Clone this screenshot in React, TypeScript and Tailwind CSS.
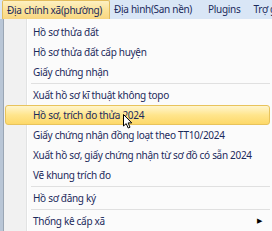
import React from 'react';

const font = { fontFamily: '"Noto Sans", "Open Sans", sans-serif' };

type Row = { label: string; sep?: boolean; active?: boolean; sub?: boolean };

const rows: Row[] = [
    { label: 'Hồ sơ thửa đất' },
    { label: 'Hồ sơ thửa đất cấp huyện' },
    { label: 'Giấy chứng nhận' },
    { label: '', sep: true },
    { label: 'Xuất hồ sơ kĩ thuật không topo' },
    { label: 'Hồ sơ, trích đo thửa 2024', active: true },
    { label: 'Giấy chứng nhận đồng loạt theo TT10/2024' },
    { label: 'Xuất hồ sơ, giấy chứng nhận từ sơ đồ có sẵn 2024' },
    { label: 'Vẽ khung trích đo' },
    { label: '', sep: true },
    { label: 'Hồ sơ đăng ký' },
    { label: '', sep: true },
    { label: 'Thống kê cấp xã', sub: true },
];

export default function App() {
    return (
        <div className="w-[272px] h-[231px] overflow-hidden bg-[#b9c6d6] text-[10px] tracking-[-0.3px] text-[#1b2a5c]" style={font}>
            {/* Menu bar */}
            <div className="h-[19px] flex items-stretch bg-[#d9e6f6] whitespace-nowrap">
                <div className="ml-[2px] pl-[4px] pr-[7px] flex items-center rounded-t-[2px] border border-b-0 border-[#e3bd5c] bg-gradient-to-b from-[#fdf0c2] via-[#fbe39a] to-[#f8d681]">
                    Địa chính xã(phường)
                </div>
                <div className="ml-[4px] flex items-center">Địa hình(San nền)</div>
                <div className="ml-[16px] flex items-center">Plugins</div>
                <div className="ml-[13px] flex items-center">Trợ giúp</div>
            </div>

            {/* Dropdown */}
            <div className="relative ml-[3px] h-[212px] pt-[3px] pr-[2px] pl-[1px] border-l border-[#9aa6b4] bg-[linear-gradient(to_right,#f1f1f1_22px,#e2e3e3_22px,#e2e3e3_23px,#ffffff_23px,#ffffff_24px,#fbfbfb_24px)]">
                {rows.map((r, i) =>
                    r.sep ? (
                        <div key={i} className="h-[3px] pl-[26px] flex items-center">
                            <div className="w-full h-px bg-[#e0e0e0]" />
                        </div>
                    ) : r.active ? (
                        <div
                            key={i}
                            className="h-[20px] pl-[27px] flex items-center rounded-[3px] border border-[#e8c35c] bg-gradient-to-b from-[#fff5cc] via-[#ffe58c] to-[#fdd868] whitespace-nowrap"
                        >
                            {r.label}
                        </div>
                    ) : (
                        <div key={i} className="h-[20px] pl-[28px] pr-[8px] flex items-center justify-between whitespace-nowrap">
                            <span>{r.label}</span>
                            {r.sub && <span className="text-[7px] text-black">▶</span>}
                        </div>
                    )
                )}

                {/* mouse pointer */}
                <svg className="absolute left-[119px] top-[95px]" width="10" height="15" viewBox="0 0 10 15">
                    <path d="M0.5 0.5 L0.5 12 L3.2 9.6 L5.2 14 L7 13.2 L5.1 8.9 L8.8 8.9 Z" fill="#fff" stroke="#000" strokeWidth="1" strokeLinejoin="round" />
                </svg>
            </div>
        </div>
    );
}
